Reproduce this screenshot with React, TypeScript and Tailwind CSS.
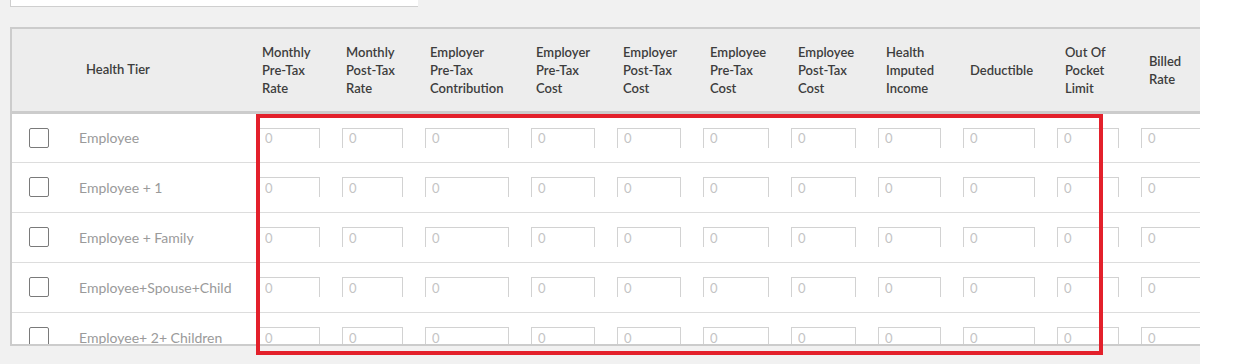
import React from "react";

const columns = [
  { label: ["Monthly", "Pre-Tax", "Rate"], width: 84, pad: "pl-[14px]" },
  { label: ["Monthly", "Post-Tax", "Rate"], width: 83, pad: "pl-[14px]" },
  { label: ["Employer", "Pre-Tax", "Contribution"], width: 106, pad: "pl-[15px]" },
  { label: ["Employer", "Pre-Tax", "Cost"], width: 86, pad: "pl-[15px]" },
  { label: ["Employer", "Post-Tax", "Cost"], width: 86, pad: "pl-[16px]" },
  { label: ["Employee", "Pre-Tax", "Cost"], width: 88, pad: "pl-[17px]" },
  { label: ["Employee", "Post-Tax", "Cost"], width: 87, pad: "pl-[17px]" },
  { label: ["Health", "Imputed", "Income"], width: 85, pad: "pl-[18px]" },
  { label: ["Deductible"], width: 94, pad: "pl-[17px]" },
  { label: ["Out Of", "Pocket", "Limit"], width: 84, pad: "pl-[18px]" },
  { label: ["Billed", "Rate"], width: 84, pad: "pl-[18px]" },
];

const tiers = [
  "Employee",
  "Employee + 1",
  "Employee + Family",
  "Employee+Spouse+Child",
  "Employee+ 2+ Children",
];

export default function App() {
  return (
    <div className="flex h-[364px] font-['Lato',sans-serif]">
      <div className="relative w-[1200px] h-[364px] overflow-hidden bg-[#f1f1f1] pl-[10px]">
        <div className="w-[408px] h-[7px] bg-white border-l border-b border-[#cfcfcf]" />

        <div className="mt-[20px] h-[319px] overflow-hidden border-t-2 border-l-2 border-b-2 border-[#cccccc] bg-white">
          <table className="table-fixed border-collapse w-[1203px]">
            <colgroup>
              <col style={{ width: 56 }} />
              <col style={{ width: 180 }} />
              {columns.map((c, i) => (
                <col key={i} style={{ width: c.width }} />
              ))}
            </colgroup>
            <thead>
              <tr className="bg-[#ededed] border-b-[3px] border-[#cccccc]">
                <th className="h-[83px]" />
                <th className="text-left font-semibold text-[13px] text-[#3d3d3d] pl-[18px]">
                  Health Tier
                </th>
                {columns.map((c, i) => (
                  <th
                    key={i}
                    className={`text-left align-middle font-semibold text-[13px] leading-[18px] text-[#3d3d3d] ${c.pad}`}
                  >
                    {c.label.map((l) => (
                      <div key={l}>{l}</div>
                    ))}
                  </th>
                ))}
              </tr>
            </thead>
            <tbody>
              {tiers.map((t) => (
                <tr key={t} className="h-[50px] border-b border-[#dddddd]">
                  <td className="pl-[17px]">
                    <div className="w-[20px] h-[20px] border border-[#7a7a7a] rounded-[2px] bg-white" />
                  </td>
                  <td className="pl-[11px] text-[14px] text-[#9a9a9a]">{t}</td>
                  {columns.map((c, i) => (
                    <td key={i} className="pl-[10px] pr-[12px]">
                      <input
                        readOnly
                        placeholder="0"
                        className="block w-full h-[20px] border-t border-x border-[#d2d2d2] pl-[6px] text-[13px] text-[#bbbbbb] placeholder:text-[#c4c4c4] outline-none bg-white"
                      />
                    </td>
                  ))}
                </tr>
              ))}
            </tbody>
          </table>
        </div>

        <div className="absolute left-[256px] top-[114px] w-[847px] h-[241px] border-4 border-[#e3202b] pointer-events-none" />
      </div>
      <div className="flex-1 bg-white" />
    </div>
  );
}
